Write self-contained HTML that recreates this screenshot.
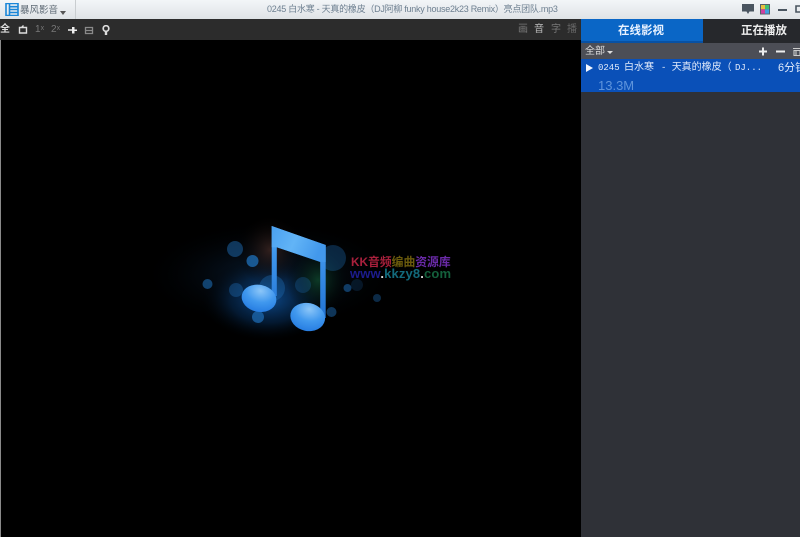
<!DOCTYPE html>
<html><head><meta charset="utf-8">
<style>
html,body{margin:0;padding:0;width:800px;height:537px;overflow:hidden;background:#000}
body{position:relative;font-family:"Liberation Sans","Noto Sans CJK SC",sans-serif}
div,span{position:absolute;white-space:nowrap}
#top{left:0;top:0;width:800px;height:19px;background:linear-gradient(#f3f6f8,#dfe3e6)}
#bar{left:0;top:19px;width:581px;height:21px;background:#2c2c2c}
#vid{left:1px;top:40px;width:580px;height:497px;background:#000}
#panel{left:581px;top:19px;width:219px;height:518px;background:#2f3137}
.t{font-size:10px;line-height:12px;color:#9a9a9a;top:24px}
.s{position:static}
.r{top:61px;line-height:14px;color:#dfe9fa}
.c{font-size:10px}
.m{font-size:9px;font-family:"Liberation Mono",monospace}
</style></head><body>
<div id="top"></div>
<div style="left:75px;top:0;width:1px;height:19px;background:#c9cdd0"></div>
<svg style="position:absolute;left:5px;top:3px" width="14" height="13" viewBox="0 0 14 13"><path d="M1 .5h12v12H1zM4.500 .5v12M9 3.700h4M9 6.500h4M9 9.500h4M4.500 3.700h4.500M4.500 6.500h4.500M4.500 9.500h4.500" fill="none" stroke="#1a86d8" stroke-width="1.600"/></svg>
<div style="left:20px;top:4px;font-size:9.500px;line-height:13px;color:#5e6a75">暴风影音</div>
<div style="left:60px;top:11px;width:0;height:0;border:3.500px solid transparent;border-top:4px solid #555;border-bottom:0"></div>
<div style="left:267px;top:3px;font-size:9px;line-height:12px;color:#6d7f90;letter-spacing:-.26px">0245 白水寒 - 天真的橡皮（DJ阿柳 funky house2k23 Remix）亮点团队.mp3</div>
<svg style="position:absolute;left:741px;top:4px" width="59" height="13" viewBox="0 0 59 13">
<path d="M1 0h12v7.500H8.500L7 10 5.500 7.500H1z" fill="#4a5560"/>
<rect x="19" y="0" width="10" height="10.500" fill="#55606a"/>
<rect x="20" y="1" width="4" height="4.300" fill="#e8c040"/><rect x="24" y="1" width="4" height="4.300" fill="#40c070"/><rect x="20" y="5.300" width="4" height="4.300" fill="#d040a0"/><rect x="24" y="5.300" width="4" height="4.300" fill="#40a0e0"/>
<rect x="37" y="5" width="9" height="2" fill="#4a5560"/>
<path d="M55 2h6v6h-6z" fill="none" stroke="#4a5560" stroke-width="1.600"/>
</svg>

<div id="bar"></div>
<div style="left:0;top:24px;font-size:10px;line-height:12px;color:#ddd;font-weight:bold">全</div>
<svg style="position:absolute;left:18px;top:25px" width="95" height="11" viewBox="0 0 95 11">
<path d="M1.500 2.500h7v5.500h-7zM3.500 2.500l2-2" fill="none" stroke="#ddd" stroke-width="1.400"/>
<path d="M50 5h5" stroke="#eee" stroke-width="1.500"/><path d="M54 2h2.500v2.500H59v1.500h-2.500v2.500H54z" fill="#eee"/>
<path d="M67.500 2.500h7v6h-7zM67.500 5.500h7" fill="none" stroke="#8a8a8a" stroke-width="1.300"/>
<circle cx="88" cy="3.500" r="2.800" fill="none" stroke="#ddd" stroke-width="1.700"/><path d="M88 6.500v3.500" stroke="#ddd" stroke-width="2.400"/>
</svg>
<div class="t" style="left:35px;color:#777">1<span style="position:relative;font-size:7px;top:-2px">x</span></div>
<div class="t" style="left:51px;color:#777">2<span style="position:relative;font-size:7px;top:-2px">x</span></div>
<div class="t" style="left:518px;color:#777">画</div>
<div class="t" style="left:534px;color:#bbb">音</div>
<div class="t" style="left:551px;color:#777">字</div>
<div class="t" style="left:567px;color:#666">播</div>

<div id="vid"></div>
<div style="left:0;top:40px;width:1px;height:497px;background:#8a8a8a"></div>
<svg style="position:absolute;left:140px;top:200px" width="330" height="150" viewBox="140 200 330 150">
<defs>
<radialGradient id="g1"><stop offset="0" stop-color="#0f58a8" stop-opacity=".8"/><stop offset=".55" stop-color="#07305e" stop-opacity=".5"/><stop offset="1" stop-color="#000" stop-opacity="0"/></radialGradient>
<radialGradient id="g2"><stop offset="0" stop-color="#3a2420" stop-opacity=".85"/><stop offset="1" stop-color="#000" stop-opacity="0"/></radialGradient>
<radialGradient id="g3"><stop offset="0" stop-color="#0d3d28" stop-opacity=".95"/><stop offset="1" stop-color="#000" stop-opacity="0"/></radialGradient>
<radialGradient id="g4"><stop offset="0" stop-color="#0b2440" stop-opacity=".85"/><stop offset="1" stop-color="#000" stop-opacity="0"/></radialGradient>
<linearGradient id="n" x1="0" y1="0" x2="0" y2="1"><stop offset="0" stop-color="#5cb0f4"/><stop offset=".3" stop-color="#3f96ec"/><stop offset="1" stop-color="#2274d4"/></linearGradient>
<linearGradient id="b" x1="0" y1="0" x2="1" y2=".3"><stop offset="0" stop-color="#4aa0f0"/><stop offset=".5" stop-color="#62b4f6"/><stop offset="1" stop-color="#4298ec"/></linearGradient>
<radialGradient id="h" cx=".5" cy=".22" r=".85"><stop offset="0" stop-color="#8cc6f8"/><stop offset=".5" stop-color="#4098ee"/><stop offset="1" stop-color="#2278e0"/></radialGradient>
</defs>
<ellipse cx="270" cy="275" rx="130" ry="55" fill="url(#g4)"/>
<ellipse cx="268" cy="300" rx="68" ry="42" fill="url(#g1)"/>
<ellipse cx="270" cy="250" rx="34" ry="36" fill="url(#g2)"/>
<ellipse cx="318" cy="280" rx="32" ry="36" fill="url(#g3)"/>
<g fill="#1d6ab0">
<circle cx="235" cy="249" r="8" opacity=".5"/><circle cx="252.500" cy="261" r="6" opacity=".8"/><circle cx="207.500" cy="284" r="5" opacity=".6"/>
<circle cx="236" cy="290" r="7" opacity=".4"/><circle cx="272" cy="288" r="13" opacity=".4"/><circle cx="258" cy="317" r="6" opacity=".75"/>
<circle cx="331.500" cy="312" r="5" opacity=".5"/><circle cx="347.500" cy="288" r="4" opacity=".55"/><circle cx="377" cy="298" r="4" opacity=".4"/>
<circle cx="333" cy="258" r="13" opacity=".35"/><circle cx="303" cy="285" r="8" opacity=".3"/><circle cx="357" cy="285" r="6" opacity=".2"/>
</g>
<path d="M271.700 226L325.700 245V318h-5.500V262L276.800 247.300V296h-5.100z" fill="url(#n)"/>
<path d="M271.700 226L325.700 245v17l-5.500-.300L276.800 247.300h-5.100z" fill="url(#b)"/>
<ellipse cx="259" cy="298.300" rx="17.500" ry="13.500" transform="rotate(12 259 298.300)" fill="url(#h)"/>
<ellipse cx="307.700" cy="317" rx="17.500" ry="14" transform="rotate(12 307.700 317)" fill="url(#h)"/>
</svg>
<div style="left:351px;top:256px;font-size:11.800px;line-height:13px;font-weight:bold;color:#a8203c">KK音频<span class="s" style="color:#6a5a0c">编曲</span><span class="s" style="color:#6a2aa8">资源库</span></div>
<div style="left:350px;top:267px;font-size:13px;line-height:14px;font-weight:bold;color:#1c1c8c;letter-spacing:.15px">www<span class="s" style="color:#ddd">.</span><span class="s" style="color:#136a7c">kkzy8</span><span class="s" style="color:#ddd">.</span><span class="s" style="color:#14603c">com</span></div>

<div id="panel"></div>
<div style="left:581px;top:19px;width:122px;height:24px;background:#0a66c6"></div>
<div style="left:581px;top:41px;width:122px;height:2px;background:#0851a4"></div>
<div style="left:618px;top:19px;line-height:25px;font-size:11.500px;font-weight:bold;color:#e8f2ff">在线影视</div>
<div style="left:703px;top:19px;width:97px;height:24px;background:#26282c"></div>
<div style="left:741px;top:19px;line-height:25px;font-size:11.500px;font-weight:bold;color:#eee">正在播放</div>
<div style="left:581px;top:43px;width:219px;height:16px;background:#4c4e56"></div>
<div style="left:585px;top:45px;font-size:10px;line-height:13px;color:#ddd">全部</div>
<div style="left:607px;top:51px;width:0;height:0;border:3px solid transparent;border-top:3px solid #ddd;border-bottom:0"></div>
<svg style="position:absolute;left:757px;top:46px" width="43" height="11" viewBox="0 0 43 11">
<path d="M2 5.500h8M6 1.500v8" stroke="#eee" stroke-width="2"/>
<path d="M19 5.500h9" stroke="#eee" stroke-width="2"/>
<path d="M36 2.500h7M37 4.500h6v5h-6zM39 4.500v5" fill="none" stroke="#ccc" stroke-width="1.100"/>
</svg>
<div style="left:581px;top:59px;width:219px;height:33px;background:#0a50b8"></div>
<div style="left:586px;top:63.500px;width:0;height:0;border-style:solid;border-width:4.500px 0 4.500px 7.500px;border-color:transparent transparent transparent #f2f6ff"></div>
<div class="r m" style="left:598px">0245</div>
<div class="r c" style="left:624px">白水寒</div>
<div class="r m" style="left:661px">-</div>
<div class="r c" style="left:671.700px">天真的橡皮（</div>
<div class="r m" style="left:735px">DJ...</div>
<div class="r" style="left:778px;font-size:11px">6分钟</div>
<div style="left:598px;top:77.500px;font-size:13px;line-height:15px;color:#5e94dc">13.3M</div>
</body></html>
